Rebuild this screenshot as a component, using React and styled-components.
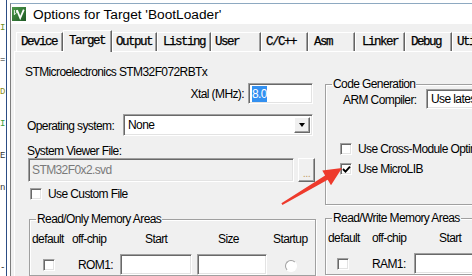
import React from 'react';
import styled, { createGlobalStyle, css } from 'styled-components';

const GlobalStyle = createGlobalStyle`
	html, body {
		margin: 0;
		padding: 0;
		background: #fff;
	}
	body {
		font-family: "Liberation Sans", Arial, sans-serif;
		font-size: 12px;
		color: #000;
	}
`;

// dialog text is narrow (Segoe-like), so squeeze Liberation Sans a bit
const uiFont = css`
	font-family: "Liberation Sans", Arial, sans-serif;
	font-size: 12px;
	letter-spacing: -0.6px;
`;

const TABS = [
	{ label: 'Device', width: 47, pad: 4 },
	{ label: 'Target', width: 49, pad: 5, active: true },
	{ label: 'Output', width: 45, pad: 3 },
	{ label: 'Listing', width: 54, pad: 5 },
	{ label: 'User', width: 50, pad: 3 },
	{ label: 'C/C++', width: 47, pad: 4 },
	{ label: 'Asm', width: 47, pad: 5 },
	{ label: 'Linker', width: 50, pad: 6 },
	{ label: 'Debug', width: 47, pad: 5 },
	{ label: 'Utilities', width: 60, pad: 4 },
];

const CODE_LINES = [
	{ text: 'I', color: '#6b8e23' },
	{ text: '' },
	{ text: '=', color: '#222' },
	{ text: '' },
	{ text: 'D', color: '#8a8a20' },
	{ text: '' },
	{ text: 'I', color: '#3a9a3a' },
	{ text: '' },
	{ text: 'E', color: '#333' },
	{ text: '' },
	{ text: 'n', color: '#333' },
	{ text: '' },
	{ text: '' },
	{ text: '' },
	{ text: '' },
	{ text: '-', color: '#222' },
];

export default function App() {
	return (
		<>
			<GlobalStyle />
			<Page>
				<Editor>
					{CODE_LINES.map((line, i) => (
						<CodeLine key={i} color={line.color}>
							{line.text}
						</CodeLine>
					))}
				</Editor>

				<Window>
					<TitleBar>
						<AppIcon />
						<TitleText>Options for Target 'BootLoader'</TitleText>
					</TitleBar>

					<DialogBody>
						<TabRow>
							{TABS.map(tab => (
								<Tab key={tab.label} width={tab.width} pad={tab.pad} active={tab.active}>
									{tab.label}
								</Tab>
							))}
						</TabRow>

						<Panel>
							<LeftCol>
								<DeviceName>STMicroelectronics STM32F072RBTx</DeviceName>

								<XtalRow>
									<span>Xtal (MHz):</span>
									<TextInput width={65}>
										<Selected>8.0</Selected>
									</TextInput>
								</XtalRow>

								<OsRow>
									<FieldLabel width={96}>Operating system:</FieldLabel>
									<Combo width={190}>
										<ComboText>None</ComboText>
										<DropButton />
									</Combo>
								</OsRow>

								<PlainLabel>System Viewer File:</PlainLabel>

								<FileRow>
									<TextInput width={266} disabled>
										STM32F0x2.svd
									</TextInput>
									<DotsButton>...</DotsButton>
								</FileRow>

								<CheckRow top={6} left={5}>
									<CheckBox />
									<span>Use Custom File</span>
								</CheckRow>

								<Group top={12} left={4} width={287}>
									<Legend>Read/Only Memory Areas</Legend>
									<MemGrid cols="40px 48px 77px 73px 1fr">
										<HeadCell>default</HeadCell>
										<HeadCell>off-chip</HeadCell>
										<HeadCell pad={25}>Start</HeadCell>
										<HeadCell pad={21}>Size</HeadCell>
										<HeadCell pad={3}>Startup</HeadCell>

										<RowCell pad={11}>
											<CheckBox />
										</RowCell>
										<RowCell pad={6}>ROM1:</RowCell>
										<RowCell>
											<TextInput width={72} />
										</RowCell>
										<RowCell>
											<TextInput width={70} />
										</RowCell>
										<RowCell pad={15}>
											<Radio />
										</RowCell>
									</MemGrid>
								</Group>
							</LeftCol>

							<RightCol>
								<Group top={12} width={180} bottom={29}>
									<Legend>Code Generation</Legend>
									<CompilerRow>
										<FieldLabel width={83}>ARM Compiler:</FieldLabel>
										<Combo width={90}>
											<ComboText>Use latest compiler version</ComboText>
										</Combo>
									</CompilerRow>

									<CheckRow top={34} left={14}>
										<CheckBox />
										<span>Use Cross-Module Optimization</span>
									</CheckRow>
									<CheckRow top={8} left={14}>
										<CheckBox checked />
										<span>Use MicroLIB</span>
									</CheckRow>
								</Group>

								<Group top={6} width={180}>
									<Legend>Read/Write Memory Areas</Legend>
									<MemGrid cols="40px 46px 1fr">
										<HeadCell>default</HeadCell>
										<HeadCell pad={4}>off-chip</HeadCell>
										<HeadCell pad={25}>Start</HeadCell>

										<RowCell pad={9}>
											<CheckBox />
										</RowCell>
										<RowCell pad={4}>RAM1:</RowCell>
										<RowCell>
											<TextInput width={72} />
										</RowCell>
									</MemGrid>
								</Group>
							</RightCol>
						</Panel>
					</DialogBody>
				</Window>

				<Arrow viewBox="0 0 472 276">
					<polygon
						points="281.4,203.2 325.1,175.6 322.3,170.6 342,168 331,185.2 327.7,179.8 282.4,204.9"
						fill="#ee3a2c"
					/>
				</Arrow>
			</Page>
		</>
	);
}

function AppIcon() {
	return (
		<IconSvg viewBox="0 0 14 14">
			<defs>
				<linearGradient id="kg" x1="0" y1="0" x2="1" y2="1">
					<stop offset="0" stopColor="#4d9a4a" />
					<stop offset="1" stopColor="#1f5a25" />
				</linearGradient>
			</defs>
			<rect x="0" y="0" width="14" height="14" fill="url(#kg)" />
			<path d="M5 3.2 L8.2 11 L11.8 2.6" fill="none" stroke="#fff" strokeWidth="1.8" />
			<path d="M2.4 3 L2.4 8 M2.4 6.2 Q3.4 7.4 4.6 5.6 L4.6 3" fill="none" stroke="#e8f2e8" strokeWidth="1" />
		</IconSvg>
	);
}

function CheckBox({ checked }) {
	return (
		<Box>
			{checked && (
				<svg width="9" height="9" viewBox="0 0 9 9">
					<path d="M1 4 L3.5 6.6 L8 1.6" fill="none" stroke="#000" strokeWidth="1.9" />
				</svg>
			)}
		</Box>
	);
}

const Page = styled.div`
	position: relative;
	display: flex;
	width: 472px;
	height: 276px;
	overflow: hidden;
	background: #fff;
`;

const Editor = styled.div`
	flex: none;
	width: 10px;
	padding-top: 20px;
	display: flex;
	flex-direction: column;
	background: linear-gradient(to right, transparent 6px, #2c4d85 6px, #2c4d85 7px, transparent 7px);
`;

const CodeLine = styled.div`
	height: 16px;
	width: 6px;
	font-family: "Liberation Mono", monospace;
	font-size: 9px;
	line-height: 16px;
	color: ${p => p.color || '#000'};
`;

const Window = styled.div`
	flex: 1;
	display: flex;
	flex-direction: column;
	min-width: 0;
	margin-top: 3px;
	border-top: 1px solid #8ea9c1;
	border-left: 1px solid #7d7d7d;
	background: #f0f0f0;
`;

const TitleBar = styled.div`
	height: 24px;
	display: flex;
	align-items: center;
	gap: 7px;
	padding-left: 1px;
	background: #fff;
`;

const IconSvg = styled.svg`
	width: 14px;
	height: 14px;
	flex: none;
`;

const TitleText = styled.span`
	font-family: "Liberation Sans", Arial, sans-serif;
	font-size: 13.7px;
	color: #000;
	white-space: nowrap;
`;

const DialogBody = styled.div`
	flex: 1;
	display: flex;
	flex-direction: column;
	padding: 6px 0 0 3px;
`;

const TabRow = styled.div`
	display: flex;
	align-items: flex-end;
	height: 21px;
	padding-left: 2px;
	position: relative;
	z-index: 1;
`;

const Tab = styled.div`
	flex: none;
	box-sizing: border-box;
	width: ${p => p.width}px;
	height: ${p => (p.active ? 22 : 19)}px;
	margin-bottom: ${p => (p.active ? -1 : 0)}px;
	padding-left: ${p => p.pad}px;
	padding-top: 1px;
	border-top: 1px solid #fff;
	border-left: 1px solid #fff;
	border-right: 1px solid #646464;
	box-shadow: inset -1px 0 #a0a0a0;
	background: #f0f0f0;
	font-family: "Liberation Mono", monospace;
	font-size: 12.5px;
	letter-spacing: -1.5px;
	-webkit-text-stroke: 0.25px #000;
	line-height: ${p => (p.active ? 19 : 17)}px;
	white-space: nowrap;
	overflow: hidden;
`;

const Panel = styled.div`
	flex: 1;
	display: grid;
	grid-template-columns: 300px 1fr;
	padding: 13px 0 0 10px;
	border-top: 1px solid #fff;
	border-left: 1px solid #fff;
	min-height: 0;
	${uiFont}
`;

const LeftCol = styled.div`
	display: flex;
	flex-direction: column;
`;

const RightCol = styled.div`
	display: flex;
	flex-direction: column;
`;

const DeviceName = styled.div`
	height: 14px;
	line-height: 14px;
	white-space: nowrap;
`;

const XtalRow = styled.div`
	margin-top: 4px;
	height: 21px;
	display: flex;
	justify-content: flex-end;
	align-items: center;
	gap: 4px;
	padding-right: 12px;
`;

const OsRow = styled.div`
	margin-top: 10px;
	height: 22px;
	display: flex;
	align-items: center;
	padding-left: 2px;
`;

const FieldLabel = styled.span`
	flex: none;
	width: ${p => p.width}px;
	padding-top: 2px;
	white-space: nowrap;
`;

const PlainLabel = styled.div`
	margin-top: 8px;
	height: 14px;
	line-height: 14px;
	padding-left: 2px;
`;

const FileRow = styled.div`
	display: flex;
	gap: 4px;
	padding-left: 3px;
	height: 24px;
`;

const sunken = css`
	box-sizing: border-box;
	border: 1px solid;
	border-color: #a0a0a0 #fff #fff #a0a0a0;
	box-shadow: inset 1px 1px #696969, inset -1px -1px #e3e3e3;
`;

const raised = css`
	box-sizing: border-box;
	border: 1px solid;
	border-color: #fff #696969 #696969 #fff;
	box-shadow: inset -1px -1px #a0a0a0;
	background: #f0f0f0;
`;

const TextInput = styled.div`
	${sunken}
	flex: none;
	width: ${p => p.width}px;
	height: ${p => (p.disabled ? 24 : 21)}px;
	display: flex;
	align-items: center;
	padding-left: 3px;
	background: ${p => (p.disabled ? '#f0f0f0' : '#fff')};
	color: ${p => (p.disabled ? '#7a7a7a' : '#000')};
	white-space: nowrap;
	overflow: hidden;
`;

const Selected = styled.span`
	background: #3390f0;
	color: #fff;
	padding: 1px 0;
	line-height: 14px;
`;

const Combo = styled.div`
	${sunken}
	flex: none;
	width: ${p => p.width}px;
	height: ${p => (p.width > 100 ? 22 : 20)}px;
	display: flex;
	align-items: center;
	padding: 2px;
	background: #fff;
	overflow: hidden;
`;

const ComboText = styled.span`
	flex: 1;
	padding-left: 2px;
	white-space: nowrap;
`;

const DropButton = styled.div`
	${raised}
	flex: none;
	width: 16px;
	height: 100%;
	display: flex;
	align-items: center;
	justify-content: center;

	&::after {
		content: '';
		border-left: 3.5px solid transparent;
		border-right: 3.5px solid transparent;
		border-top: 4px solid #000;
	}
`;

const DotsButton = styled.div`
	${raised}
	flex: none;
	width: 17px;
	height: 24px;
	display: flex;
	align-items: flex-end;
	justify-content: center;
	padding-bottom: 4px;
	color: #c4a06a;
	font-size: 11px;
	line-height: 8px;
	letter-spacing: -0.5px;
`;

const CheckRow = styled.div`
	margin-top: ${p => p.top}px;
	padding-left: ${p => p.left}px;
	display: flex;
	align-items: center;
	gap: 6px;
	height: 12px;
	white-space: nowrap;
`;

const Box = styled.div`
	${sunken}
	flex: none;
	width: 12px;
	height: 12px;
	background: #fff;
	display: flex;
	align-items: center;
	justify-content: center;
`;

const Radio = styled.div`
	box-sizing: border-box;
	width: 12px;
	height: 12px;
	border-radius: 50%;
	border: 1px solid;
	border-color: #a0a0a0 #fff #fff #a0a0a0;
	background: #fff;
	margin-top: 2px;
`;

const Group = styled.fieldset`
	flex: none;
	box-sizing: border-box;
	margin: ${p => p.top || 0}px 0 0 ${p => p.left || 0}px;
	padding: 0 0 ${p => p.bottom || 0}px 0;
	width: ${p => p.width}px;
	min-width: 0;
	border: 1px solid #a0a0a0;
	box-shadow: inset 1px 1px #fff, 1px 1px #fff;
`;

const Legend = styled.legend`
	margin-left: 6px;
	padding: 0 1px;
	line-height: 14px;
	white-space: nowrap;
`;

const CompilerRow = styled.div`
	margin-top: -2px;
	height: 20px;
	display: flex;
	align-items: center;
	padding-left: 17px;
`;

const MemGrid = styled.div`
	display: grid;
	grid-template-columns: ${p => p.cols};
	grid-template-rows: 14px 21px;
	row-gap: 8px;
	margin-top: 6px;
	padding-left: 2px;
`;

const HeadCell = styled.div`
	padding-left: ${p => p.pad || 0}px;
	line-height: 14px;
	white-space: nowrap;
`;

const RowCell = styled.div`
	display: flex;
	align-items: center;
	padding-left: ${p => p.pad || 0}px;
	white-space: nowrap;
`;

const Arrow = styled.svg`
	position: absolute;
	left: 0;
	top: 0;
	width: 472px;
	height: 276px;
	pointer-events: none;
`;
